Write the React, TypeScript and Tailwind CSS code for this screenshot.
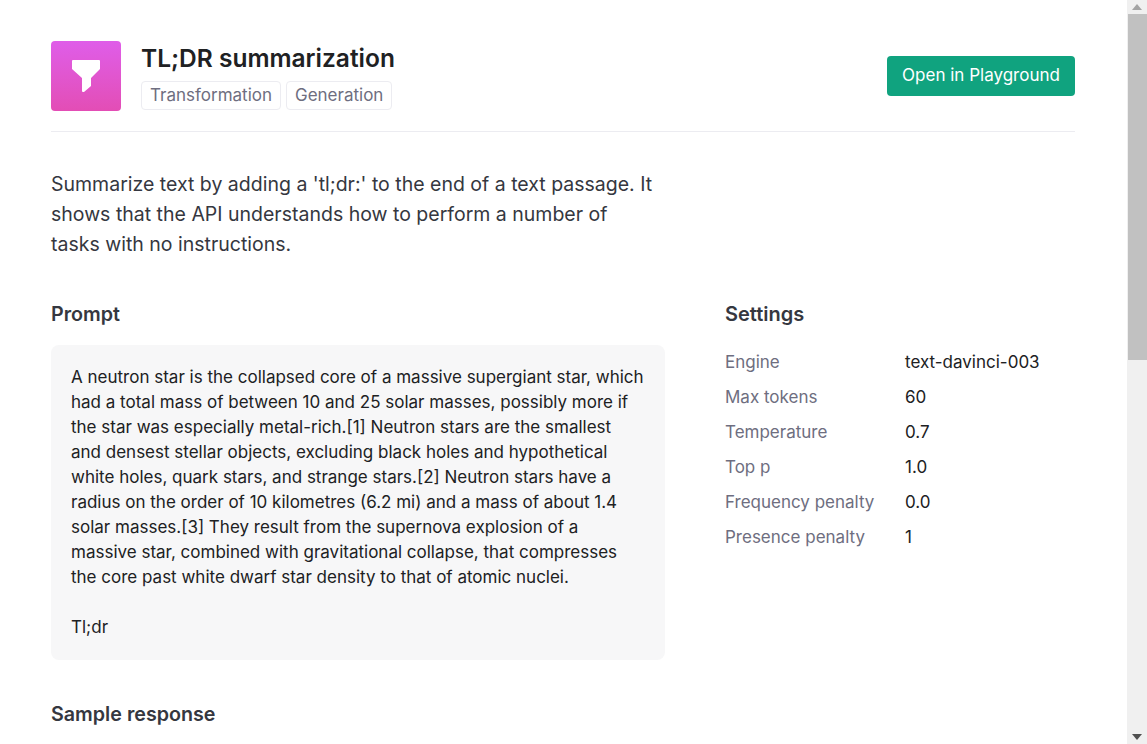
const prompt = [
  "A neutron star is the collapsed core of a massive supergiant star, which",
  "had a total mass of between 10 and 25 solar masses, possibly more if",
  "the star was especially metal-rich.[1] Neutron stars are the smallest",
  "and densest stellar objects, excluding black holes and hypothetical",
  "white holes, quark stars, and strange stars.[2] Neutron stars have a",
  "radius on the order of 10 kilometres (6.2 mi) and a mass of about 1.4",
  "solar masses.[3] They result from the supernova explosion of a",
  "massive star, combined with gravitational collapse, that compresses",
  "the core past white dwarf star density to that of atomic nuclei.",
];

const settings = [
  ["Engine", "text-davinci-003"],
  ["Max tokens", "60"],
  ["Temperature", "0.7"],
  ["Top p", "1.0"],
  ["Frequency penalty", "0.0"],
  ["Presence penalty", "1"],
];

export default function App() {
  return (
    <div className="flex h-[744px] w-[1147px] overflow-hidden bg-white font-['Inter',sans-serif] text-[#353740]">
      <main className="w-[1127px] shrink-0 px-[51px] pr-[52px] pt-[41px]">
        <header className="flex items-center justify-between border-b border-[#ececf1] pb-[20px]">
          <div className="flex gap-[20px]">
            <div className="flex h-[70px] w-[70px] items-center justify-center rounded-[4px] bg-gradient-to-b from-[#df5de9] to-[#e34db5]">
              <svg width="28" height="32" viewBox="0 0 28 32" fill="#fff">
                <path d="M0 1 Q0 0 1 0 H27 Q28 0 28 1 V9 L19 18 V26 L12 32 H11 Q10 32 10 31 V18 L0 9 Z" />
              </svg>
            </div>
            <div>
              <h1 className="text-[24.5px] font-semibold leading-[34px] text-[#202123]">TL;DR summarization</h1>
              <div className="mt-[6px] flex gap-[5px]">
                <span className="rounded-[4px] border border-[#ececf1] px-[8px] text-[17px] leading-[27px] text-[#6e6e80]">Transformation</span>
                <span className="rounded-[4px] border border-[#ececf1] px-[8px] text-[17px] leading-[27px] text-[#6e6e80]">Generation</span>
              </div>
            </div>
          </div>
          <button className="h-[40px] w-[188px] rounded-[4px] bg-[#10a37f] text-[17px] text-white">Open in Playground</button>
        </header>

        <p className="mt-[37px] w-[604px] text-[19.5px] leading-[30px]">
          Summarize text by adding a 'tl;dr:' to the end of a text passage. It shows that the API understands how to perform a number of tasks with no instructions.
        </p>

        <div className="mt-[40px] flex gap-[60px]">
          <section className="w-[614px]">
            <h2 className="text-[19.7px] font-semibold leading-[30px]">Prompt</h2>
            <div className="mt-[16px] rounded-[8px] bg-[#f7f7f8] px-[20px] py-[20px] text-[17px] leading-[25px] text-[#202123]">
              {prompt.map((l) => (
                <div key={l} className="whitespace-nowrap">{l}</div>
              ))}
              <div className="mt-[25px]">Tl;dr</div>
            </div>
            <h2 className="mt-[39px] text-[19.7px] font-semibold leading-[30px]">Sample response</h2>
          </section>
          <section className="flex-1">
            <h2 className="text-[20px] font-semibold leading-[30px]">Settings</h2>
            <dl className="mt-[21px] flex flex-col gap-[10px] text-[17px] leading-[25px]">
              {settings.map(([k, v]) => (
                <div key={k} className="flex">
                  <dt className="w-[180px] text-[#6e6e80]">{k}</dt>
                  <dd className="text-[#202123]">{v}</dd>
                </div>
              ))}
            </dl>
          </section>
        </div>
      </main>

      <div className="flex w-[20px] shrink-0 flex-col bg-[#f0f0f0]">
        <div className="flex h-[14px] items-center justify-center">
          <svg width="10" height="6" viewBox="0 0 10 6" fill="#a3a3a3"><path d="M5 0 L10 6 H0 Z" /></svg>
        </div>
        <div className="ml-[1px] h-[346px] bg-[#c1c1c1]" />
        <div className="flex-1" />
        <div className="flex h-[14px] items-center justify-center">
          <svg width="10" height="6" viewBox="0 0 10 6" fill="#505050"><path d="M0 0 H10 L5 6 Z" /></svg>
        </div>
      </div>
    </div>
  );
}
